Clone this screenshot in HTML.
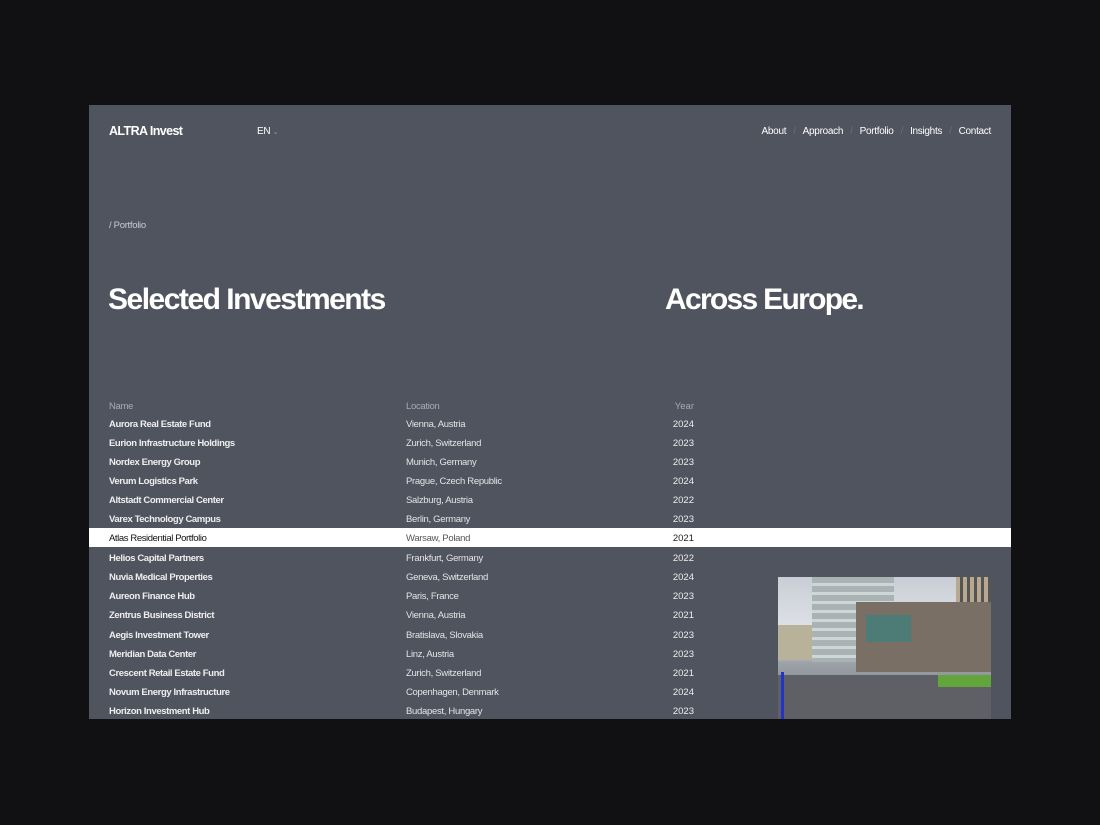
<!DOCTYPE html>
<html><head><style>
*{margin:0;padding:0;box-sizing:border-box}
body{width:1100px;height:825px;background:#111114;font-family:"Liberation Sans",Arial,sans-serif;position:relative;overflow:hidden}
.f{position:absolute;left:89px;top:105px;width:922px;height:614px;background:#50545e;overflow:hidden}
.a{position:absolute;color:#fff;white-space:nowrap}
.nav span{margin-left:7px}
.nav i{font-style:normal;color:#6b6f79;margin-left:7px}
.row{position:absolute;left:0;width:922px;height:19px;font-size:9.5px;color:#eee}
.row b{position:absolute;left:20px;top:5px;font-weight:bold;letter-spacing:-.4px}
.row s{text-decoration:none;position:absolute;left:317px;top:5px;color:#e4e4e8;letter-spacing:-.3px}
.row u{text-decoration:none;position:absolute;left:555px;width:50px;text-align:right;top:5px}
.row.h{background:#fff;color:#222}
.row.h b{font-weight:normal;color:#111}
.row.h s{color:#555}
</style></head><body>
<div class="f">
<div class="a" style="left:20px;top:19px;font-size:12.5px;font-weight:bold;letter-spacing:-.6px">ALTRA Invest</div>
<div class="a" style="left:168px;top:21px;font-size:10px;letter-spacing:-.3px">EN <span style="color:#9a9ea8;font-size:7px">⌄</span></div>
<div class="a nav" style="right:20px;top:21px;font-size:10px;letter-spacing:-.3px">About<i>/</i><span>Approach</span><i>/</i><span>Portfolio</span><i>/</i><span>Insights</span><i>/</i><span>Contact</span></div>
<div class="a" style="left:20px;top:115px;font-size:9.5px;color:#c8cad0;letter-spacing:-.3px">/ Portfolio</div>
<div class="a" style="left:19px;top:178px;font-size:30px;font-weight:bold;letter-spacing:-1.5px">Selected Investments</div>
<div class="a" style="left:576px;top:178px;font-size:30px;font-weight:bold;letter-spacing:-1.7px">Across Europe.</div>
<div class="row" style="top:291px;color:#a8abb3"><s style="left:20px;color:#a8abb3">Name</s><s style="color:#a8abb3">Location</s><u>Year</u></div>
<div class="row" style="top:309px"><b>Aurora Real Estate Fund</b><s>Vienna, Austria</s><u>2024</u></div>
<div class="row" style="top:328px"><b>Eurion Infrastructure Holdings</b><s>Zurich, Switzerland</s><u>2023</u></div>
<div class="row" style="top:347px"><b>Nordex Energy Group</b><s>Munich, Germany</s><u>2023</u></div>
<div class="row" style="top:366px"><b>Verum Logistics Park</b><s>Prague, Czech Republic</s><u>2024</u></div>
<div class="row" style="top:385px"><b>Altstadt Commercial Center</b><s>Salzburg, Austria</s><u>2022</u></div>
<div class="row" style="top:404px"><b>Varex Technology Campus</b><s>Berlin, Germany</s><u>2023</u></div>
<div class="row h" style="top:423px"><b>Atlas Residential Portfolio</b><s>Warsaw, Poland</s><u>2021</u></div>
<div class="row" style="top:443px"><b>Helios Capital Partners</b><s>Frankfurt, Germany</s><u>2022</u></div>
<div class="row" style="top:462px"><b>Nuvia Medical Properties</b><s>Geneva, Switzerland</s><u>2024</u></div>
<div class="row" style="top:481px"><b>Aureon Finance Hub</b><s>Paris, France</s><u>2023</u></div>
<div class="row" style="top:500px"><b>Zentrus Business District</b><s>Vienna, Austria</s><u>2021</u></div>
<div class="row" style="top:520px"><b>Aegis Investment Tower</b><s>Bratislava, Slovakia</s><u>2023</u></div>
<div class="row" style="top:539px"><b>Meridian Data Center</b><s>Linz, Austria</s><u>2023</u></div>
<div class="row" style="top:558px"><b>Crescent Retail Estate Fund</b><s>Zurich, Switzerland</s><u>2021</u></div>
<div class="row" style="top:577px"><b>Novum Energy Infrastructure</b><s>Copenhagen, Denmark</s><u>2024</u></div>
<div class="row" style="top:596px"><b>Horizon Investment Hub</b><s>Budapest, Hungary</s><u>2023</u></div>
<div style="position:absolute;left:689px;top:472px;width:213px;height:142px;background:linear-gradient(#c9ced6,#e6e8ec 50%,#9ea3aa 60%,#6c6e73);overflow:hidden">
 <div style="position:absolute;left:34px;top:0;width:82px;height:85px;background:repeating-linear-gradient(#a9b3b3 0 6px,#cfd6d8 6px 9px)"></div>
 <div style="position:absolute;left:0;top:48px;width:34px;height:35px;background:#b9b29a"></div>
 <div style="position:absolute;left:178px;top:0;width:35px;height:30px;background:repeating-linear-gradient(90deg,#b9a890 0 4px,#555 4px 7px)"></div>
 <div style="position:absolute;left:78px;top:25px;width:135px;height:70px;background:#7a6f64"></div>
 <div style="position:absolute;left:88px;top:38px;width:45px;height:27px;background:#4d7c76"></div>
 <div style="position:absolute;left:0;top:98px;width:213px;height:44px;background:#5f6065"></div>
 <div style="position:absolute;left:160px;top:98px;width:53px;height:12px;background:#62a53a"></div>
 <div style="position:absolute;left:3px;top:95px;width:3px;height:47px;background:#2233cc"></div>
</div>
</div>
</body></html>
